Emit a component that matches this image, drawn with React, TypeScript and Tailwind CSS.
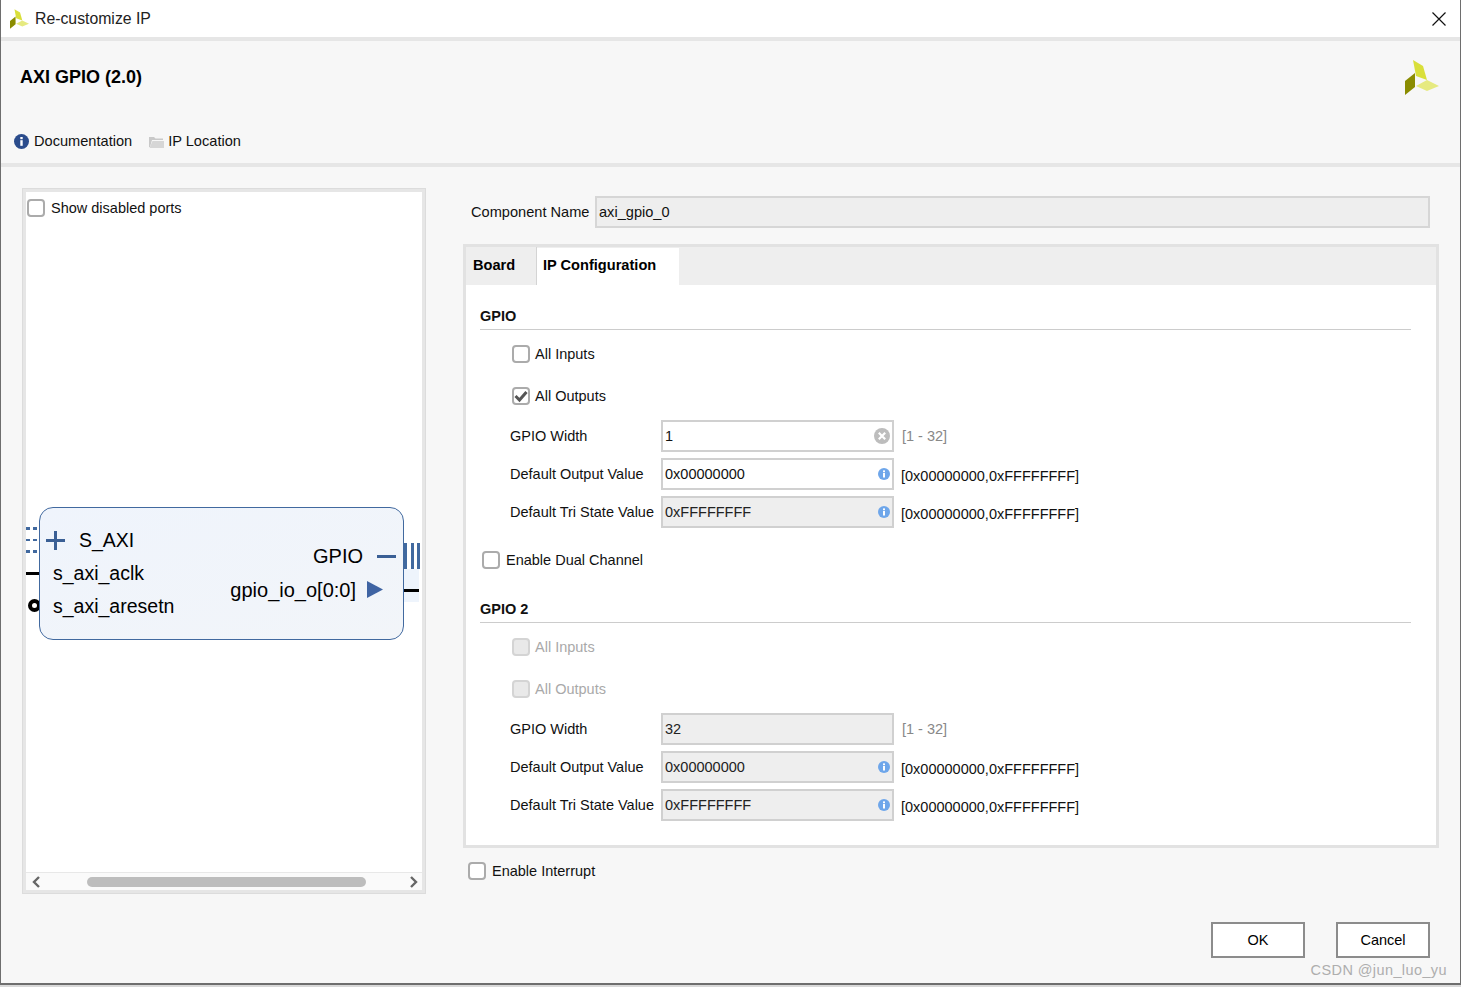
const Logo = ({ className }: { className: string }) => (
  <svg viewBox="0 0 34 35" className={className}>
    <polygon points="8,0 18,6 22,20 11,16" fill="#d9df3a" />
    <polygon points="11,26 22,20 34,26 22,31" fill="#e6ea80" />
    <polygon points="0,21 10,13 10,27 0,35" fill="#8a8c00" />
  </svg>
);

const Check = ({ checked, disabled }: { checked?: boolean; disabled?: boolean }) => (
  <span
    className={`flex h-[18px] w-[18px] shrink-0 items-center justify-center rounded-[4px] border-2 ${
      disabled ? "border-[#d4d4d4] bg-[#e9e9e9]" : "border-[#ababab] bg-white"
    }`}
  >
    {checked && (
      <svg viewBox="0 0 14 14" className="h-[14px] w-[14px]">
        <path d="M1.5 7 L5.5 11 L12.5 3" fill="none" stroke="#555" strokeWidth="3" />
      </svg>
    )}
  </span>
);

const CheckRow = ({ label, checked, disabled }: { label: string; checked?: boolean; disabled?: boolean }) => (
  <div className="flex h-[42px] items-center gap-[5px] pl-[32px]">
    <Check checked={checked} disabled={disabled} />
    <span className={`pt-[2px] ${disabled ? "text-[#a9a9a9]" : ""}`}>{label}</span>
  </div>
);

const InfoDot = () => (
  <svg viewBox="0 0 12 12" className="h-3 w-3 shrink-0">
    <circle cx="6" cy="6" r="6" fill="#6ea6ea" />
    <rect x="5" y="5" width="2" height="4.5" fill="#fff" />
    <rect x="5" y="2.4" width="2" height="1.8" fill="#fff" />
  </svg>
);

const ClearDot = () => (
  <svg viewBox="0 0 16 16" className="h-4 w-4 shrink-0">
    <circle cx="8" cy="8" r="8" fill="#bdbdbd" />
    <path d="M4.8 4.8 L11.2 11.2 M11.2 4.8 L4.8 11.2" stroke="#fff" strokeWidth="2.2" />
  </svg>
);

const FieldRow = ({
  label,
  value,
  hint,
  readOnly,
  icon,
  dimHint,
}: {
  label: string;
  value: string;
  hint: string;
  readOnly?: boolean;
  icon?: "info" | "clear";
  dimHint?: boolean;
}) => (
  <div className="flex h-8 items-center pl-[30px]">
    <span className="w-[151px] shrink-0 pt-[2px]">{label}</span>
    <div
      className={`flex h-8 w-[233px] shrink-0 items-center justify-between border-2 border-[#d0d0d0] pl-[2px] pr-[2px] ${
        readOnly ? "bg-[#eeeeee]" : "bg-white"
      }`}
    >
      <span className={`pt-[2px] ${readOnly ? "text-[#222]" : ""}`}>{value}</span>
      {icon === "info" && <InfoDot />}
      {icon === "clear" && <ClearDot />}
    </div>
    {dimHint ? (
      <span className="ml-2 mt-[1px] text-[#888]">{hint}</span>
    ) : (
      <span className="ml-[7px] mt-[5px]">{hint}</span>
    )}
  </div>
);

const Heading = ({ title }: { title: string }) => (
  <div className="flex h-[25px] items-start border-b border-[#cccccc] font-bold">
    <span className="leading-[23px]">{title}</span>
  </div>
);

const SectionRows = ({ first }: { first?: boolean }) => (
  <>
    <div className="pt-[3px]">
      <CheckRow label="All Inputs" disabled={!first} />
      <CheckRow label="All Outputs" checked={first} disabled={!first} />
    </div>
    <div className="mt-[3px] flex flex-col gap-[6px]">
      <FieldRow label="GPIO Width" value={first ? "1" : "32"} hint="[1 - 32]" dimHint readOnly={!first} icon={first ? "clear" : undefined} />
      <FieldRow label="Default Output Value" value="0x00000000" hint="[0x00000000,0xFFFFFFFF]" readOnly={!first} icon="info" />
      <FieldRow label="Default Tri State Value" value="0xFFFFFFFF" hint="[0x00000000,0xFFFFFFFF]" readOnly icon="info" />
    </div>
  </>
);

const BlockDiagram = () => (
  <div className="absolute left-0 top-[315px] h-[140px] w-[396px] text-[19.5px] leading-6 text-black">
    {/* left pins */}
    <svg viewBox="0 0 12 27" className="absolute left-0 top-[20px] h-[27px] w-[12px]">
      <path d="M0 0 H4 V3 H0 Z M7 0 H11 V3 H7 Z M0 12 H4 V14 H0 Z M7 12 H11 V14 H7 Z M0 23 H4 V26 H0 Z M7 23 H11 V26 H7 Z" fill="#41699f" />
    </svg>
    <div className="absolute left-0 top-[65px] h-[3px] w-[13px] bg-black" />
    <div className="absolute left-[2px] top-[92px] h-[13px] w-[13px] rounded-full border-[4px] border-black bg-white" />
    {/* right pins */}
    <div className="absolute left-[378px] top-[36px] flex h-[26px] w-[16px] justify-between">
      <span className="w-[3px] bg-[#41699f]" />
      <span className="w-[3px] bg-[#41699f]" />
      <span className="w-[3px] bg-[#41699f]" />
    </div>
    <div className="absolute left-[378px] top-[62px] h-[33px] w-[15px] bg-[#eef4fc]" />
    <div className="absolute left-[378px] top-[82px] h-[3px] w-[15px] bg-black" />
    {/* block */}
    <div className="absolute left-[13px] top-0 h-[133px] w-[365px] rounded-[14px] border border-[#41699f] bg-gradient-to-br from-[#eff4fc] to-[#f2f5f9]">
      <svg viewBox="0 0 19 19" className="absolute left-[6px] top-[23px] h-[19px] w-[19px]">
        <path d="M0 9.5 H19 M9.5 0 V19" stroke="#3a5f95" strokeWidth="3" />
      </svg>
      <span className="absolute left-[39px] top-[20px]">S_AXI</span>
      <span className="absolute left-[13px] top-[53px]">s_axi_aclk</span>
      <span className="absolute left-[13px] top-[86px]">s_axi_aresetn</span>
      <span className="absolute right-[40px] top-[36px] text-[20px]">GPIO</span>
      <div className="absolute left-[337px] top-[47px] h-[3px] w-[19px] bg-[#3a5f95]" />
      <span className="absolute right-[47px] top-[70px] text-[20px]">gpio_io_o[0:0]</span>
      <svg viewBox="0 0 16 17" className="absolute left-[327px] top-[73px] h-[17px] w-4">
        <polygon points="0,0 16,8.5 0,17" fill="#3f64a3" />
      </svg>
    </div>
  </div>
);

export default function App() {
  return (
    <div className="relative h-[987px] w-[1461px] overflow-hidden bg-[#d9d9d9] font-['Liberation_Sans',Arial,sans-serif] text-[14.5px] text-[#111]">
      <div className="flex h-[985px] flex-col border-b-2 border-l border-r border-[#6e6e6e] bg-[#f7f7f7]">
        {/* title bar */}
        <div className="flex h-[37px] shrink-0 items-center justify-between bg-white pl-[9px] pr-[14px]">
          <div className="flex items-center gap-[6px]">
            <Logo className="h-[20px] w-[19px]" />
            <span className="text-[15.8px] text-[#222]">Re-customize IP</span>
          </div>
          <svg viewBox="0 0 14 14" className="h-[14px] w-[14px]">
            <path d="M0.5 0.5 L13.5 13.5 M13.5 0.5 L0.5 13.5" stroke="#111" strokeWidth="1.2" />
          </svg>
        </div>

        {/* header */}
        <div className="flex h-[130px] shrink-0 flex-col border-y-4 border-[#e6e6e6]">
          <div className="flex h-[90px] items-start justify-between pl-[19px] pr-[21px] pt-[19px]">
            <h1 className="mt-[5px] text-[18px] font-bold leading-[24px] text-black">AXI GPIO (2.0)</h1>
            <Logo className="h-[35px] w-[34px]" />
          </div>
          <div className="flex items-center pl-[13px]">
            <svg viewBox="0 0 15 15" className="h-[15px] w-[15px]">
              <circle cx="7.5" cy="7.5" r="7.5" fill="#2b4c8c" />
              <rect x="6.3" y="6.2" width="2.4" height="5.6" fill="#fff" />
              <rect x="6.3" y="3" width="2.4" height="2.2" fill="#fff" />
            </svg>
            <span className="ml-[5px] text-[14.6px]">Documentation</span>
            <svg viewBox="0 0 15 13" className="ml-[17px] h-[13px] w-[15px]">
              <path d="M0 2 H5 L6.5 3.5 H14 V5 H3 L1 12 H0 Z" fill="#c9c9c9" />
              <path d="M3.5 6 H15 V13 H0.5 Z" fill="#d6d6d6" />
            </svg>
            <span className="ml-[4px] text-[14.6px]">IP Location</span>
          </div>
        </div>

        {/* main */}
        <div className="flex min-h-0 flex-1 pl-[21px] pt-[21px]">
          {/* block diagram panel */}
          <div className="flex h-[706px] w-[404px] shrink-0 flex-col border-[4px] border-[#e6e6e6] outline outline-1 -outline-offset-1 outline-[#dcdcdc]">
            <div className="relative min-h-0 flex-1 bg-white">
              <div className="flex items-center gap-[6px] pl-[1px] pt-[4px]">
                <Check />
                <span className="pt-[2px]">Show disabled ports</span>
              </div>
              <BlockDiagram />
            </div>
            {/* scrollbar */}
            <div className="flex h-[18px] shrink-0 items-center border-t border-[#e8e8e8] bg-[#fafafa] pl-[5px] pr-[3px]">
              <svg viewBox="0 0 10 12" className="h-3 w-[10px] shrink-0">
                <path d="M8 1 L3 6 L8 11" fill="none" stroke="#666" strokeWidth="2.4" />
              </svg>
              <div className="ml-[46px] h-[10px] w-[279px] rounded-full bg-[#bdbdbd]" />
              <svg viewBox="0 0 10 12" className="ml-auto h-3 w-[10px] shrink-0">
                <path d="M2 1 L7 6 L2 11" fill="none" stroke="#666" strokeWidth="2.4" />
              </svg>
            </div>
          </div>

          {/* settings */}
          <div className="ml-[37px] flex w-[976px] shrink-0 flex-col">
            <div className="mt-[8px] flex h-8 items-center pl-[8px] pr-[9px] text-[14.6px]">
              <span className="w-[124px] shrink-0 pt-[2px]">Component Name</span>
              <div className="flex h-8 flex-1 items-center border-2 border-[#d6d6d6] bg-[#eeeeee] pl-[2px] pt-[2px]">axi_gpio_0</div>
            </div>

            <div className="mt-[16px] h-[604px] border-[3px] border-[#e2e2e2] bg-white">
              <div className="flex h-[38px] bg-[#eeeeee] text-[14.6px] font-bold text-black">
                <div className="flex w-[71px] items-center border-r border-[#d4d4d4] pl-[7px]">Board</div>
                <div className="mt-[1px] flex w-[142px] items-center bg-white pb-[1px] pl-[6px]">IP Configuration</div>
              </div>
              <div className="pl-[14px] pr-[25px] pt-[20px]">
                <Heading title="GPIO" />
                <SectionRows first />
                <div className="mt-[11px] flex h-[42px] items-center gap-[6px] pl-[2px]">
                  <Check />
                  <span className="pt-[2px]">Enable Dual Channel</span>
                </div>
                <div className="mt-[17px]">
                  <Heading title="GPIO 2" />
                </div>
                <SectionRows />
              </div>
            </div>

            <div className="mt-[14px] flex h-[18px] items-center gap-[6px] pl-[5px]">
              <Check />
              <span className="pt-[2px]">Enable Interrupt</span>
            </div>

            <div className="mt-[42px] flex justify-end gap-[31px] pr-[9px]">
              <button className="h-9 w-[94px] border-2 border-[#8c8c8c] bg-white pt-[2px] text-black">OK</button>
              <button className="h-9 w-[94px] border-2 border-[#8c8c8c] bg-white pt-[2px] text-black">Cancel</button>
            </div>
          </div>
        </div>
      </div>

      {/* watermark */}
      <span className="absolute right-[14px] top-[960px] text-[14.5px] tracking-[0.4px] text-[#aeaeae]">CSDN @jun_luo_yu</span>
    </div>
  );
}
